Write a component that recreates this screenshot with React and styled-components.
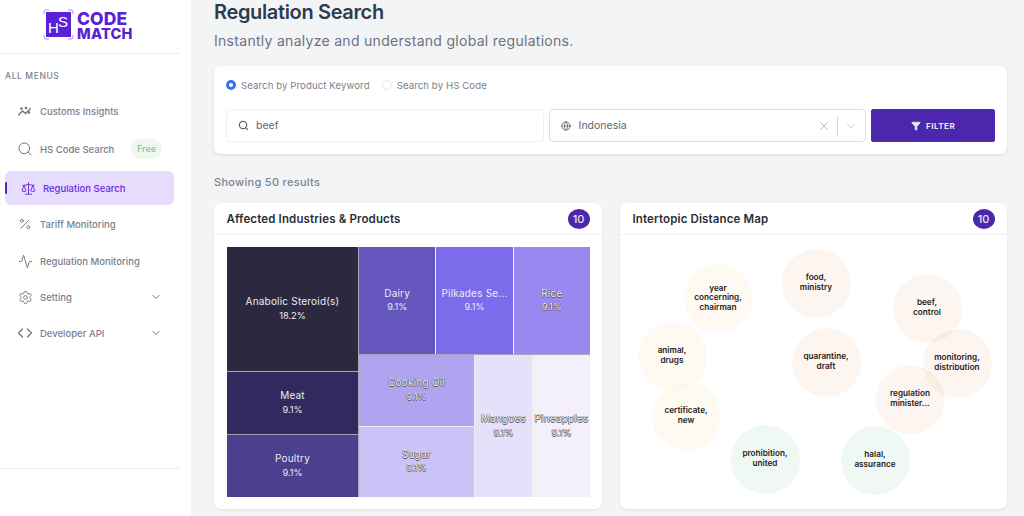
import React from 'react';
import styled, { createGlobalStyle } from 'styled-components';
import { Search, Scale, Percent, Activity, Settings, ChevronDown, Globe, X, Funnel } from 'lucide-react';

const GlobalStyle = createGlobalStyle`
    html, body {
        margin: 0;
        padding: 0;
        background: #f3f4f6;
        font-family: Inter, "Liberation Sans", sans-serif;
        overflow: hidden;
    }
    * { box-sizing: border-box; }
`

const Page = styled.div`
    display: flex;
    width: 1024px;
    height: 516px;
    overflow: hidden;
`

const Sidebar = styled.aside`
    width: 191px;
    flex: none;
    height: 516px;
    background: #fff;
    display: flex;
    flex-direction: column;
`

const LogoBar = styled.div`
    width: 180px;
    height: 54px;
    flex: none;
    border-bottom: 1px solid #eceef1;
    display: flex;
    align-items: flex-start;
    padding: 9px 0 0 43px;
    gap: 3px;
`

const LogoWords = styled.div`
    display: flex;
    flex-direction: column;
    gap: 1px;
    padding-top: 3px;
`

const LogoLine = styled.span`
    display: block;
    color: #5b21d6;
    font-family: Inter, "Liberation Sans", sans-serif;
    font-weight: 800;
    font-size: ${props => props.$size}px;
    line-height: ${props => props.$line}px;
    letter-spacing: ${props => props.$spacing}px;
`

const MenuLabel = styled.div`
    margin: 16px 0 0 5px;
    font-size: 8.5px;
    font-weight: 500;
    letter-spacing: 0.6px;
    line-height: 12px;
    color: #7c828d;
`

const Menu = styled.nav`
    display: flex;
    flex-direction: column;
    margin-top: 11px;
    flex: 1;
`

const Item = styled.a`
    position: relative;
    display: flex;
    align-items: center;
    width: 169px;
    height: ${props => props.$h}px;
    margin: ${props => props.$active ? 2 : 0}px 0 0 5px;
    padding-left: ${props => props.$active ? 15 : 12}px;
    gap: 7px;
    border-radius: 6px;
    background: ${props => props.$active ? '#e6dcfb' : 'transparent'};
    color: ${props => props.$active ? '#6d28e8' : '#7b808c'};
    font-size: 9.5px;
    font-weight: 500;
`

const IconSlot = styled.span`
    width: 16px;
    height: 16px;
    flex: none;
    display: flex;
    align-items: center;
    justify-content: center;
`

const ActiveMark = styled.span`
    position: absolute;
    left: 0;
    top: 11px;
    width: 2px;
    height: 12px;
    background: #5b21d6;
    border-radius: 1px;
`

const FreeTag = styled.span`
    margin-left: auto;
    margin-right: 12px;
    padding: 0 6px;
    height: 20px;
    border-radius: 10px;
    background: #eff7f1;
    color: #7fc397;
    font-size: 9px;
    line-height: 20px;
    font-weight: 500;
`

const Caret = styled(ChevronDown)`
    margin-left: auto;
    margin-right: 12px;
`

const SideFooter = styled.div`
    width: 180px;
    height: 48px;
    flex: none;
    border-top: 1px solid #eceef1;
`

const Main = styled.main`
    flex: 1;
    padding: 0 17px 0 23px;
    min-width: 0;
`

const Title = styled.h1`
    margin: 0;
    height: 25px;
    font-size: 20px;
    line-height: 24px;
    font-weight: 600;
    letter-spacing: -0.35px;
    color: #2d3b4e;
`

const Subtitle = styled.p`
    margin: 7px 0 0;
    font-size: 14px;
    line-height: 18px;
    letter-spacing: 0.29px;
    color: #6b7280;
`

const FilterCard = styled.section`
    margin-top: 16px;
    height: 88px;
    padding: 12px;
    background: #fff;
    border-radius: 6px;
    box-shadow: 0 1px 3px rgba(0, 0, 0, 0.12);
`

const RadioRow = styled.div`
    display: flex;
    align-items: center;
    height: 14px;
    gap: 12px;
`

const RadioLabel = styled.label`
    display: flex;
    align-items: center;
    gap: 5px;
    font-size: 9.6px;
    letter-spacing: 0.1px;
    color: #7a7f88;
`

const RadioDot = styled.span`
    width: 10px;
    height: 10px;
    border-radius: 50%;
    background: #fff;
    border: ${props => props.$on ? '3px solid #3a6ff0' : '1px solid #e5e7eb'};
`

const FieldRow = styled.div`
    display: flex;
    margin-top: 17px;
    height: 33px;
    gap: 5px;
`

const SearchField = styled.div`
    width: 318px;
    display: flex;
    align-items: center;
    gap: 7px;
    padding-left: 11px;
    border: 1px solid #eef0f3;
    border-radius: 4px;
    color: #5f6570;
    font-size: 10.5px;
`

const SelectField = styled.div`
    width: 318px;
    display: flex;
    align-items: center;
    gap: 8px;
    padding-left: 11px;
    border: 1px solid #dcdee2;
    border-radius: 4px;
    color: #5f6570;
    font-size: 10.5px;
`

const SelectTools = styled.div`
    margin-left: auto;
    display: flex;
    align-items: center;
    height: 100%;
    padding-right: 7px;
`

const Divider = styled.span`
    width: 1px;
    height: 20px;
    margin: 0 6px 0 7px;
    background: #d5d7db;
`

const FilterButton = styled.button`
    width: 124px;
    border: 1px solid #4f2ab0;
    border-radius: 2px;
    background: #4c27ad;
    color: #e9e4f6;
    font-family: inherit;
    font-size: 8px;
    font-weight: 700;
    letter-spacing: 0.5px;
    display: flex;
    align-items: center;
    justify-content: center;
    gap: 5px;
`

const ResultCount = styled.div`
    margin-top: 21px;
    height: 14px;
    font-size: 11px;
    line-height: 14px;
    font-weight: 500;
    letter-spacing: 0.3px;
    color: #7d838d;
`

const CardGrid = styled.div`
    display: grid;
    grid-template-columns: 388px 387px;
    gap: 18px;
    margin-top: 14px;
`

const Card = styled.section`
    height: 306px;
    background: #fff;
    border-radius: 7px;
    box-shadow: 0 1px 2px rgba(0, 0, 0, 0.08);
    display: flex;
    flex-direction: column;
`

const CardHead = styled.header`
    height: 32px;
    flex: none;
    display: flex;
    align-items: center;
    justify-content: space-between;
    padding: 0 12.5px;
    border-bottom: 1px solid #f0f1f3;
    font-size: 11.5px;
    font-weight: 600;
    letter-spacing: 0.14px;
    color: #2b2e35;
`

const Count = styled.span`
    width: 22px;
    height: 20px;
    border-radius: 50%;
    background: #4c27ad;
    color: #e9e4f6;
    font-size: 11px;
    font-weight: 500;
    letter-spacing: 0;
    display: flex;
    align-items: center;
    justify-content: center;
`

const Treemap = styled.div`
    margin: 12px 12px 0 13px;
    height: 250px;
    display: flex;
    gap: 1px;
    background: #a9a6b8;
`

const TreeColumn = styled.div`
    display: flex;
    flex-direction: column;
    gap: 1px;
    width: ${props => props.$w}px;
    height: 100%;
    flex: none;
`

const TreeRow = styled.div`
    display: flex;
    gap: 1px;
    height: ${props => props.$h}px;
    flex: none;
    background: #eee;
`

const Cell = styled.div`
    flex: ${props => props.$h ? 'none' : 1};
    height: ${props => props.$h ? props.$h + 'px' : 'auto'};
    min-width: 0;
    min-height: 0;
    padding-bottom: 1px;
    background: ${props => props.$bg};
    display: flex;
    flex-direction: column;
    align-items: center;
    justify-content: center;
    font-size: 10px;
    line-height: 13.5px;
    letter-spacing: 0.2px;
    color: ${props => props.$soft ? '#f4f3f8' : '#eceaf2'};
    text-shadow: ${props => props.$soft
        ? '0.5px 0 0.5px #555, -0.5px 0 0.5px #555, 0 0.5px 0.5px #555, 0 -0.5px 0.5px #555'
        : 'none'};
    small {
        font-size: 9.2px;
        letter-spacing: 0;
    }
`

const BubbleMap = styled.div`
    position: relative;
    flex: 1;
`

const Bubble = styled.div`
    position: absolute;
    width: 69px;
    height: 69px;
    border-radius: 50%;
    background: ${props => props.$bg};
    outline: ${props => props.$ring ? '1px solid #fff' : 'none'};
    display: flex;
    align-items: center;
    justify-content: center;
    text-align: center;
    color: #1f2125;
    font-size: 8.2px;
    line-height: 9.6px;
    font-weight: 600;
`

const tints = {
    cream: 'rgba(247, 205, 140, 0.11)',
    peach: 'rgba(240, 165, 115, 0.115)',
    mint: 'rgba(120, 190, 150, 0.115)',
};

// centre of each bubble, measured from the top left of the map area
const bubbles = [
    { text: ['year', 'concerning,', 'chairman'], x: 98, y: 63, tint: 'cream' },
    { text: ['food,', 'ministry'], x: 196, y: 48, tint: 'peach' },
    { text: ['beef,', 'control'], x: 307, y: 73, tint: 'peach' },
    { text: ['monitoring,', 'distribution'], x: 337, y: 128, tint: 'peach', ring: true },
    { text: ['quarantine,', 'draft'], x: 206, y: 127, tint: 'peach' },
    { text: ['regulation', 'minister...'], x: 290, y: 164, tint: 'peach', ring: true },
    { text: ['animal,', 'drugs'], x: 52, y: 121, tint: 'cream' },
    { text: ['certificate,', 'new'], x: 66, y: 181, tint: 'cream', ring: true },
    { text: ['prohibition,', 'united'], x: 145, y: 224, tint: 'mint' },
    { text: ['halal,', 'assurance'], x: 255, y: 225, tint: 'mint' },
];

const TrendIcon = () => (
    <svg width="16" height="16" viewBox="0 0 16 16" fill="none" stroke="#6f7480" strokeWidth="1.3" strokeLinecap="round">
        <path d="M1.5 12 L5.5 8 L8.5 10.5 L13.5 5.5" />
        <circle cx="4.5" cy="5.5" r="0.7" fill="#6f7480" />
        <circle cx="9" cy="5" r="0.7" fill="#6f7480" />
        <circle cx="12" cy="9.5" r="0.7" fill="#6f7480" />
    </svg>
);

const CodeIcon = () => (
    <svg width="16" height="16" viewBox="0 0 16 16" fill="none" stroke="#6f7480" strokeWidth="1.3" strokeLinecap="round" strokeLinejoin="round">
        <path d="M5.5 4 L1.5 8 L5.5 12 M10.5 4 L14.5 8 L10.5 12" />
    </svg>
);

const Logo = () => (
    <svg width="31" height="31" viewBox="0 0 31 31" fill="none">
        <path d="M1 5V3a2 2 0 0 1 2-2h3M25 1h3a2 2 0 0 1 2 2v2M30 26v2a2 2 0 0 1-2 2h-3M6 30H3a2 2 0 0 1-2-2v-2" stroke="#a98af0" strokeWidth="1" />
        <rect x="3" y="3" width="25" height="25" fill="#5b21d6" />
        <text x="5" y="24" fontFamily="Liberation Sans, sans-serif" fontSize="15" fill="#fff">H</text>
        <text x="15" y="18" fontFamily="Liberation Sans, sans-serif" fontSize="15" fill="#fff">S</text>
    </svg>
);

const App = () => (
    <Page>
        <GlobalStyle />
        <Sidebar>
            <LogoBar>
                <Logo />
                <LogoWords>
                    <LogoLine $size={17.5} $line={14} $spacing={0.1}>CODE</LogoLine>
                    <LogoLine $size={14.5} $line={13} $spacing={0.2}>MATCH</LogoLine>
                </LogoWords>
            </LogoBar>
            <MenuLabel>ALL MENUS</MenuLabel>
            <Menu>
                <Item $h={36}><IconSlot><TrendIcon /></IconSlot>Customs Insights</Item>
                <Item $h={40}><IconSlot><Search size={16} color="#6f7480" strokeWidth={1.5} /></IconSlot>HS Code Search<FreeTag>Free</FreeTag></Item>
                <Item $active $h={34}>
                    <ActiveMark />
                    <IconSlot><Scale size={15} color="#6d28e8" strokeWidth={1.5} /></IconSlot>Regulation Search
                </Item>
                <Item $h={38}><IconSlot><Percent size={14} color="#6f7480" strokeWidth={1.5} /></IconSlot>Tariff Monitoring</Item>
                <Item $h={36}><IconSlot><Activity size={15} color="#6f7480" strokeWidth={1.5} /></IconSlot>Regulation Monitoring</Item>
                <Item $h={36}><IconSlot><Settings size={15} color="#6f7480" strokeWidth={1.5} /></IconSlot>Setting<Caret size={12} color="#6f7480" /></Item>
                <Item $h={36}><IconSlot><CodeIcon /></IconSlot>Developer API<Caret size={12} color="#6f7480" /></Item>
            </Menu>
            <SideFooter />
        </Sidebar>
        <Main>
            <Title>Regulation Search</Title>
            <Subtitle>Instantly analyze and understand global regulations.</Subtitle>
            <FilterCard>
                <RadioRow>
                    <RadioLabel><RadioDot $on />Search by Product Keyword</RadioLabel>
                    <RadioLabel><RadioDot />Search by HS Code</RadioLabel>
                </RadioRow>
                <FieldRow>
                    <SearchField><Search size={11} color="#5f6570" strokeWidth={2.6} />beef</SearchField>
                    <SelectField>
                        <Globe size={10} color="#5f6570" strokeWidth={2} />Indonesia
                        <SelectTools>
                            <X size={12} color="#b9bcc2" strokeWidth={2} />
                            <Divider />
                            <ChevronDown size={14} color="#c2c4c9" strokeWidth={1.6} />
                        </SelectTools>
                    </SelectField>
                    <FilterButton><Funnel size={10} fill="#e9e4f6" color="#e9e4f6" />FILTER</FilterButton>
                </FieldRow>
            </FilterCard>
            <ResultCount>Showing 50 results</ResultCount>
            <CardGrid>
                <Card>
                    <CardHead>Affected Industries &amp; Products<Count>10</Count></CardHead>
                    <Treemap>
                        <TreeColumn $w={131}>
                            <Cell $h={124} $bg="#2b2840">Anabolic Steroid(s)<small>18.2%</small></Cell>
                            <Cell $bg="#322a5e">Meat<small>9.1%</small></Cell>
                            <Cell $bg="#4c3f8e">Poultry<small>9.1%</small></Cell>
                        </TreeColumn>
                        <TreeColumn $w={231}>
                            <TreeRow $h={107}>
                                <Cell $bg="#6456bd">Dairy<small>9.1%</small></Cell>
                                <Cell $bg="#7c6cec">Pilkades Se...<small>9.1%</small></Cell>
                                <Cell $bg="#9a88f1" $soft>Rice<small>9.1%</small></Cell>
                            </TreeRow>
                            <TreeRow $h={142}>
                                <TreeColumn $w={115}>
                                    <Cell $bg="#b0a4f1" $soft>Cooking Oil<small>9.1%</small></Cell>
                                    <Cell $bg="#cbc3f7" $soft>Sugar<small>9.1%</small></Cell>
                                </TreeColumn>
                                <Cell $bg="#e6e1fb" $soft>Mangoes<small>9.1%</small></Cell>
                                <Cell $bg="#f3f0fc" $soft>Pineapples<small>9.1%</small></Cell>
                            </TreeRow>
                        </TreeColumn>
                    </Treemap>
                </Card>
                <Card>
                    <CardHead>Intertopic Distance Map<Count>10</Count></CardHead>
                    <BubbleMap>
                        {bubbles.map(b => (
                            <Bubble
                                key={b.text[0]}
                                $bg={tints[b.tint]}
                                $ring={b.ring}
                                style={{ left: b.x - 34.5, top: b.y - 34.5 }}
                            >
                                <span>{b.text.map(line => <div key={line}>{line}</div>)}</span>
                            </Bubble>
                        ))}
                    </BubbleMap>
                </Card>
            </CardGrid>
        </Main>
    </Page>
);

export default App;
